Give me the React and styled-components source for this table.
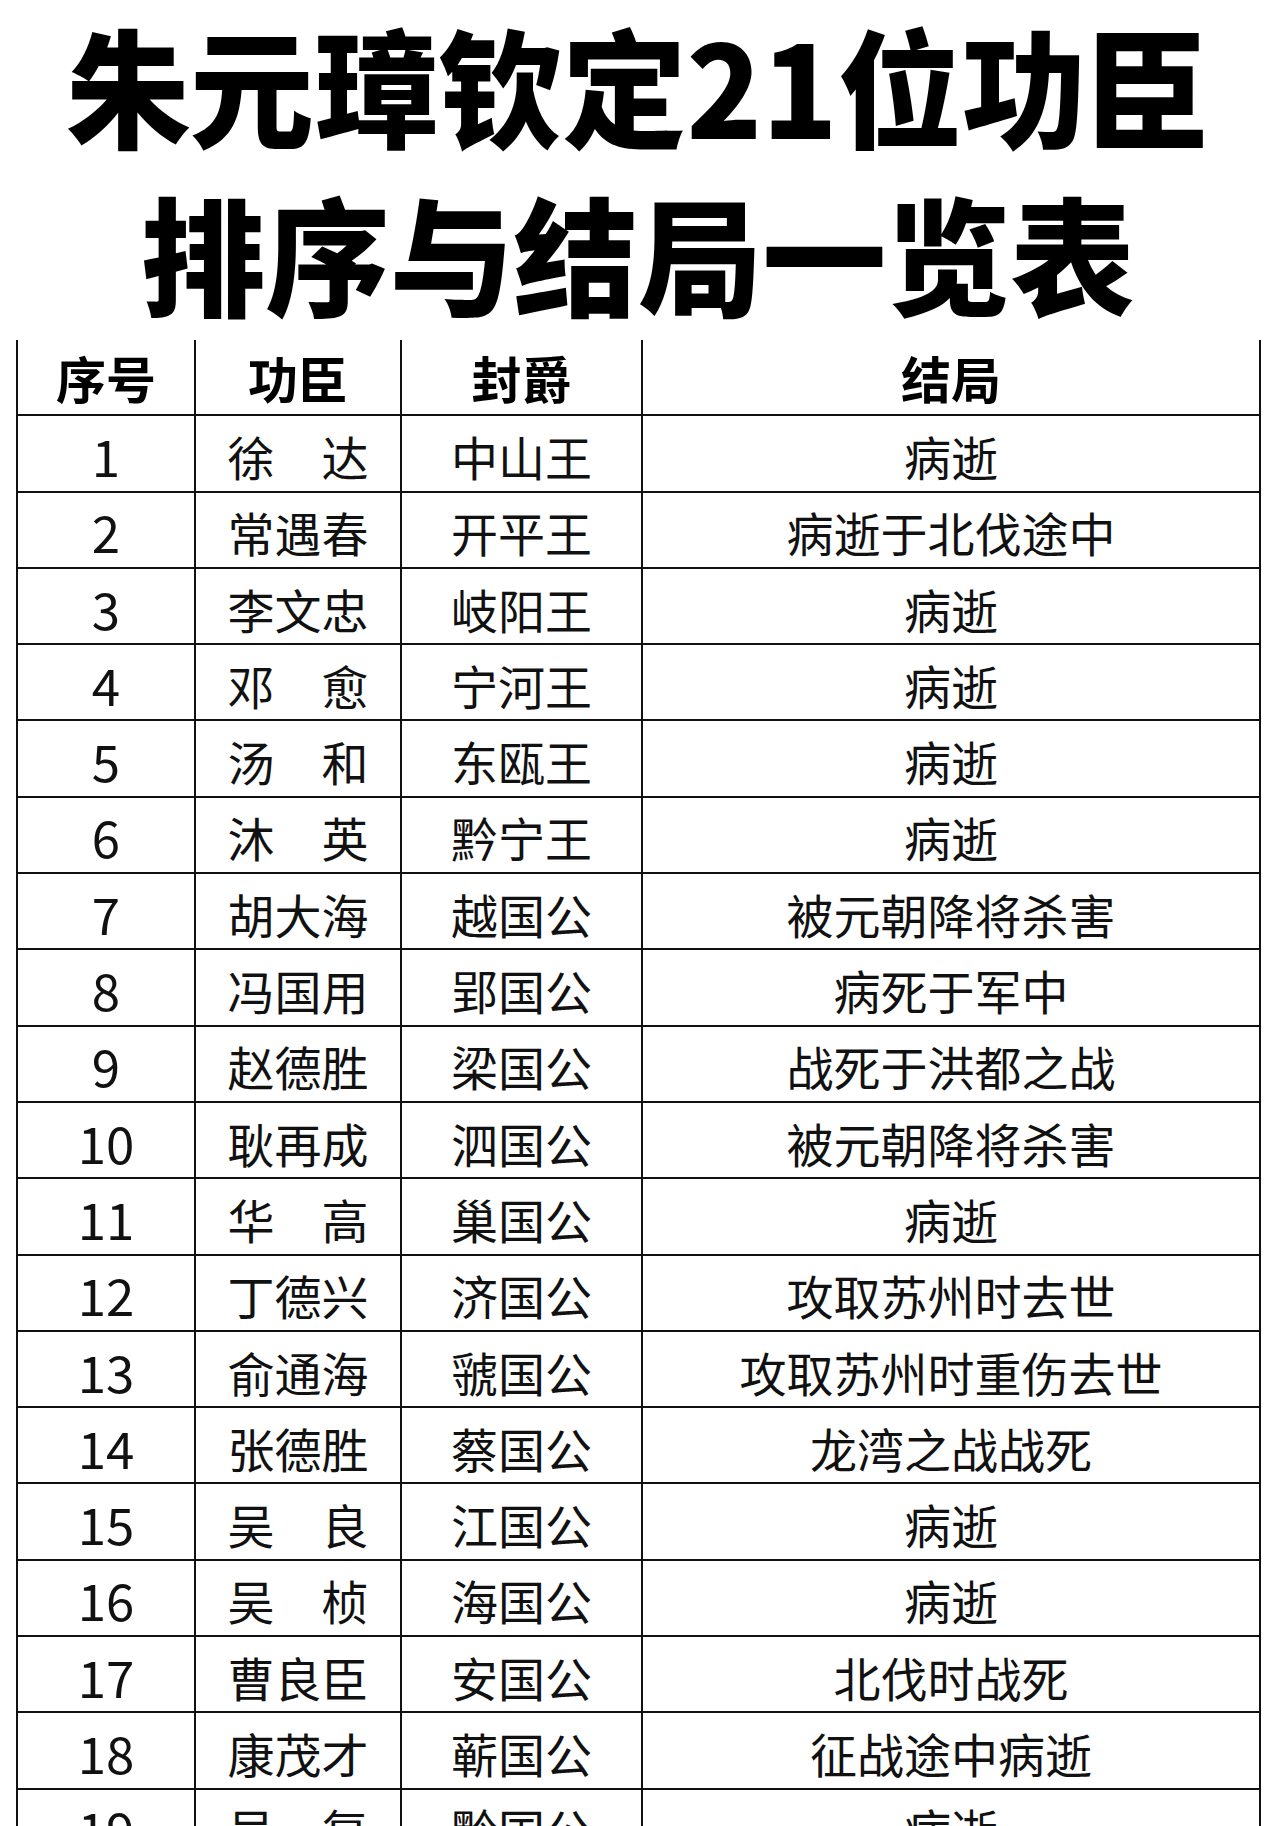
import React from "react";
import styled, { createGlobalStyle } from "styled-components";

const rows = [
  ["1", "徐　达", "中山王", "病逝"],
  ["2", "常遇春", "开平王", "病逝于北伐途中"],
  ["3", "李文忠", "岐阳王", "病逝"],
  ["4", "邓　愈", "宁河王", "病逝"],
  ["5", "汤　和", "东瓯王", "病逝"],
  ["6", "沐　英", "黔宁王", "病逝"],
  ["7", "胡大海", "越国公", "被元朝降将杀害"],
  ["8", "冯国用", "郢国公", "病死于军中"],
  ["9", "赵德胜", "梁国公", "战死于洪都之战"],
  ["10", "耿再成", "泗国公", "被元朝降将杀害"],
  ["11", "华　高", "巢国公", "病逝"],
  ["12", "丁德兴", "济国公", "攻取苏州时去世"],
  ["13", "俞通海", "虢国公", "攻取苏州时重伤去世"],
  ["14", "张德胜", "蔡国公", "龙湾之战战死"],
  ["15", "吴　良", "江国公", "病逝"],
  ["16", "吴　桢", "海国公", "病逝"],
  ["17", "曹良臣", "安国公", "北伐时战死"],
  ["18", "康茂才", "蕲国公", "征战途中病逝"],
  ["19", "吴　复", "黔国公", "病逝"],
];

const GlobalStyle = createGlobalStyle`
  body {
    margin: 0;
    background: #fff;
    font-family: "Noto Sans CJK SC", "Noto Sans", sans-serif;
    color: #111;
  }
`;

function App() {
  return (
    <>
      <GlobalStyle />
      <Page>
        <Title>
          <TitleLine>朱元璋钦定21位功臣</TitleLine>
          <TitleLine>排序与结局一览表</TitleLine>
        </Title>
        <Table>
          <Row>
            <HeadCell>序号</HeadCell>
            <HeadCell>功臣</HeadCell>
            <HeadCell>封爵</HeadCell>
            <HeadCell>结局</HeadCell>
          </Row>
          {rows.map(([no, name, title, end]) => (
            <Row key={no}>
              <Cell $num>{no}</Cell>
              <Cell>{name}</Cell>
              <Cell>{title}</Cell>
              <Cell>{end}</Cell>
            </Row>
          ))}
        </Table>
      </Page>
    </>
  );
}

const Page = styled.div`
  width: 1276px;
  height: 1826px;
  overflow: hidden;
`;

const Title = styled.div`
  display: flex;
  flex-direction: column;
  align-items: center;
  height: 340px;
`;

const TitleLine = styled.div`
  font-size: 128px;
  font-weight: 900;
  line-height: 168px;
  height: 168px;
  color: #000;
  white-space: nowrap;
  transform: scaleX(0.97);
`;

const Table = styled.div`
  margin-left: 16px;
  width: 1245px;
  border-left: 2px solid #111;
  box-sizing: border-box;
`;

const Row = styled.div`
  display: grid;
  grid-template-columns: 178px 206px 241px 618px;
  height: 76.3px;
  box-sizing: border-box;
  border-bottom: 2px solid #111;
`;

const Cell = styled.div`
  display: flex;
  align-items: center;
  justify-content: center;
  border-right: 2px solid #111;
  font-size: ${(p) => (p.$num ? "51px" : "47px")};
  line-height: 1;
  padding-top: 4px;
  color: #111;
  white-space: nowrap;
`;

const HeadCell = styled(Cell)`
  font-size: 50px;
  font-weight: 700;
  color: #000;
  padding-top: 0;
`;

export default App;
